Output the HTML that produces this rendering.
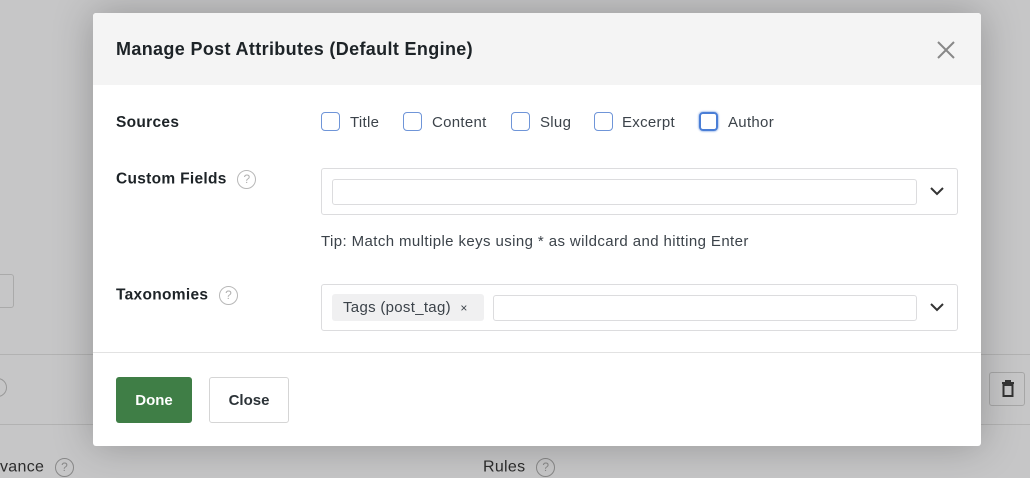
<!DOCTYPE html>
<html><head><style>
*{box-sizing:border-box;margin:0;padding:0}
body{width:1030px;height:478px;overflow:hidden;background:#c6c6c7;font-family:"Liberation Sans",sans-serif;position:relative;color:#1e1e1e}
.abs{position:absolute}
.modal{left:93px;top:13px;width:888px;height:433px;background:#fff;border-radius:3px;box-shadow:0 0 40px rgba(0,0,0,.25);overflow:hidden}
.hdr{height:72px;background:#f4f4f4;position:relative}
.hdr h1{position:absolute;left:23px;top:26px;font-size:18px;letter-spacing:0.35px;font-weight:bold;color:#1d2327;white-space:nowrap}
.lbl{font-size:15.5px;letter-spacing:0.3px;font-weight:bold;color:#1d2327;white-space:nowrap}
.cb{position:absolute;top:99px;width:19px;height:19px;border:1.5px solid #6f95d8;border-radius:4px}
.ct{position:absolute;top:101px;font-size:15px;letter-spacing:0.3px;color:#3c434a}
.q{display:inline-block;width:19px;height:19px;border:1.5px solid #b8b8b8;border-radius:50%;color:#b0b0b0;font-size:12px;text-align:center;line-height:16px;font-weight:normal;letter-spacing:0;vertical-align:middle}
.box{border:1px solid #dcdcde;border-radius:3px;height:47px;width:637px}
.inp{border:1px solid #dcdcde;border-radius:3px;height:26px}
</style></head><body>
<div class="abs" style="left:0;top:274px;width:14px;height:34px;border:1px solid #aaa;border-left:none;border-radius:0 3px 3px 0"></div>
<div class="abs" style="left:0;top:354px;width:1030px;height:1px;background:#b2b2b2"></div>
<div class="abs" style="left:0;top:424px;width:1030px;height:1px;background:#b2b2b2"></div>
<div class="abs" style="left:-12px;top:378px;width:19px;height:19px;border:1.5px solid #999;border-radius:50%"></div>
<div class="abs" style="left:989px;top:372px;width:36px;height:34px;border:1px solid #a6a6a6;border-radius:3px">
<svg width="36" height="34" viewBox="0 0 36 34"><path d="M12 10h12M16 10V8h4v2M13.5 12h9v11h-9z" fill="none" stroke="#333" stroke-width="2"/></svg></div>
<div class="abs" style="left:0;top:458px;font-size:16px;letter-spacing:0.3px;color:#2c2c2c">vance <span class="q" style="border-color:#888;color:#888;margin-left:6px">?</span></div>
<div class="abs" style="left:483px;top:458px;font-size:16px;letter-spacing:0.3px;color:#2c2c2c">Rules <span class="q" style="border-color:#888;color:#888;margin-left:6px">?</span></div>

<div class="abs modal">
<div class="hdr"><h1>Manage Post Attributes (Default Engine)</h1>
<svg class="abs" style="left:844px;top:28px" width="18" height="18" viewBox="0 0 18 18"><path d="M1 1L17 17M17 1L1 17" stroke="#888" stroke-width="2"/></svg></div>
<div class="abs lbl" style="left:23px;top:101px">Sources</div>
<span class="cb" style="left:228px"></span><span class="ct" style="left:257px">Title</span>
<span class="cb" style="left:310px"></span><span class="ct" style="left:339px">Content</span>
<span class="cb" style="left:418px"></span><span class="ct" style="left:447px">Slug</span>
<span class="cb" style="left:501px"></span><span class="ct" style="left:529px">Excerpt</span>
<span class="cb" style="left:606px;border:2px solid #4a7ed6;box-shadow:0 0 2px #4a7ed6"></span><span class="ct" style="left:635px">Author</span>
<div class="abs lbl" style="left:23px;top:157px">Custom Fields <span class="q" style="margin-left:6px">?</span></div>
<div class="abs box" style="left:228px;top:155px">
<div class="abs inp" style="left:10px;top:10px;width:585px"></div>
<svg class="abs" style="left:607px;top:16px" width="16" height="12" viewBox="0 0 16 12"><path d="M2 3l6 6 6-6" fill="none" stroke="#333" stroke-width="2"/></svg></div>
<div class="abs" style="left:228px;top:220px;font-size:15px;letter-spacing:0.4px;color:#3c434a;white-space:nowrap">Tip: Match multiple keys using * as wildcard and hitting Enter</div>
<div class="abs lbl" style="left:23px;top:273px">Taxonomies <span class="q" style="margin-left:6px">?</span></div>
<div class="abs box" style="left:228px;top:271px">
<div class="abs" style="left:10px;top:9px;width:152px;height:27px;background:#f0f0f1;border-radius:3px;font-size:15px;letter-spacing:0.3px;color:#3c434a;padding:5px 0 0 11px;white-space:nowrap">Tags (post_tag) <span style="font-size:12px;margin-left:5px">×</span></div>
<div class="abs inp" style="left:171px;top:10px;width:424px"></div>
<svg class="abs" style="left:607px;top:16px" width="16" height="12" viewBox="0 0 16 12"><path d="M2 3l6 6 6-6" fill="none" stroke="#333" stroke-width="2"/></svg></div>
<div class="abs" style="left:0;top:339px;width:888px;height:1px;background:#e2e2e2"></div>
<div class="abs" style="left:23px;top:364px;width:76px;height:46px;background:#3f7e46;border-radius:3px;color:#fff;font-weight:bold;font-size:15px;text-align:center;line-height:48px">Done</div>
<div class="abs" style="left:116px;top:364px;width:80px;height:46px;border:1px solid #d5d5d5;border-radius:3px;color:#2c3338;font-weight:bold;font-size:15px;text-align:center;line-height:46px">Close</div>
</div>
</body></html>
